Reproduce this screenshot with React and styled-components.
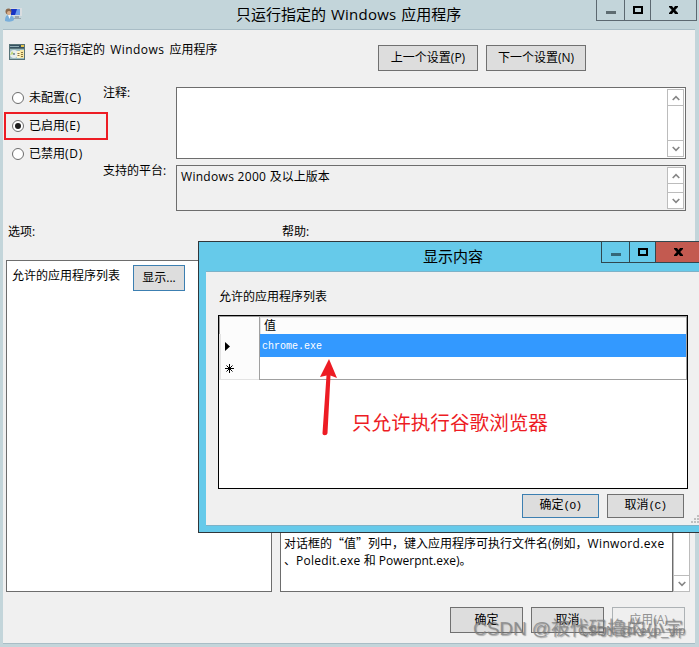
import React from "react";
import styled, { createGlobalStyle } from "styled-components";

const GlobalStyle = createGlobalStyle`
  * { box-sizing: border-box; }
  body {
    margin: 0;
    overflow: hidden;
    font-family: "Open Sans", "Noto Sans CJK SC", sans-serif;
    font-size: 12px;
    line-height: 16px;
    color: #000;
  }
`;

const Window = styled.div`
  position: relative;
  display: flex;
  flex-direction: column;
  width: 699px;
  height: 647px;
  padding: 0 4px 3px 3px;
  background: #c3d5da;
  overflow: hidden;
  white-space: nowrap;
`;
const TitleBar = styled.div`
  display: flex;
  justify-content: space-between;
  height: ${props => props.h}px;
  flex: none;
`;
const AppIcon = styled.svg`
  width: 18px;
  height: 16px;
  margin: 7px 0 0 1px;
  flex: none;
`;
const Title = styled.div`
  flex: 1;
  padding-left: ${props => props.left}px;
  font-size: 15px;
  line-height: 29px;
  word-spacing: 1px;
`;
const Controls = styled.div`
  display: flex;
  height: 22px;
  margin-top: -1px;
  margin-right: ${props => props.right}px;
  border: 1px solid ${props => props.line};
`;
const Control = styled.div`
  display: flex;
  align-items: center;
  justify-content: center;
  width: ${props => props.w}px;
  background: ${props => props.bg || "transparent"};
  border-left: ${props => props.line ? `1px solid ${props.line}` : "none"};
`;
const Client = styled.div`
  flex: 1;
  background: #f0f0f0;
  border-top: 1px solid #a9bdc6;
  border-bottom: 1px solid #a9bdc6;
`;
const Header = styled.div`
  display: flex;
  height: 57px;
  padding: 14px 0 0 6px;
`;
const PolicyIcon = styled.svg`
  width: 16px;
  height: 16px;
  flex: none;
`;
const PolicyName = styled.div`
  width: 353px;
  margin-top: -2px;
  padding-left: 8px;
  word-spacing: 2px;
`;
// slightly wider latin letters, without touching the chinese ones
const Latin = styled.span`
  letter-spacing: ${props => props.spacing || 0.25}px;
`;
const Quote = styled.span`
  font-family: "Noto Sans CJK SC", sans-serif;
`;
const Button = styled.button`
  width: ${props => props.w}px;
  height: ${props => props.h || 26}px;
  padding: 0 0 ${props => props.lift || 0}px;
  margin: 0 8px 0 0;
  flex: none;
  font: inherit;
  line-height: 16px;
  color: ${props => props.off ? "#929292" : "#000"};
  background: ${props => props.off ? "#efefef" : "#dddddd"};
  border: 1px solid ${props => props.off ? "#adb2b5" : props.focus ? "#3c7fb1" : "#707070"};
`;
const HeaderButtons = styled.div`
  display: flex;
  margin-top: 1px;
`;
const Settings = styled.div`
  display: grid;
  grid-template-columns: 100px 73px 510px;
  height: 124px;
`;
const Radios = styled.div`
  padding: 0 0 0 1px;
`;
const RadioRow = styled.label`
  display: flex;
  align-items: center;
  width: 104px;
  height: 28px;
  margin-top: ${props => props.first ? "-3px" : "0"};
  padding: 0 0 1px 6px;
  border: 2px solid ${props => props.marked ? "#ed1c24" : "transparent"};
`;
const Dot = styled.span`
  display: flex;
  align-items: center;
  justify-content: center;
  width: 12px;
  height: 12px;
  margin-right: 5px;
  border: 1px solid #6c6c6c;
  border-radius: 50%;
  background: #fff;
  &::after {
    content: "";
    width: 6px;
    height: 6px;
    border-radius: 50%;
    background: ${props => props.on ? "#1c1c1c" : "transparent"};
  }
`;
const Labels = styled.div`
  display: grid;
  grid-template-rows: 78px 46px;
  margin-top: -2px;
`;
const Fields = styled.div`
  display: grid;
  grid-template-rows: 72px 46px;
  gap: 6px;
`;
const Field = styled.div`
  display: flex;
  justify-content: space-between;
  padding: 1px;
  background: ${props => props.bg};
  border: 1px solid #6d6d6d;
`;
const FieldText = styled.div`
  padding: 2px 0 0 3px;
`;
const ScrollTrack = styled.div`
  display: flex;
  flex-direction: column;
  justify-content: space-between;
  width: 17px;
  background: #fff;
  border: 1px solid #bcbcbc;
`;
const ScrollButton = styled.div`
  display: flex;
  align-items: center;
  justify-content: center;
  height: 16px;
  border-top: ${props => props.down ? "1px solid #bcbcbc" : "none"};
  border-bottom: ${props => props.down ? "none" : "1px solid #bcbcbc"};
`;
const SectionLabels = styled.div`
  display: grid;
  grid-template-columns: 274px 1fr;
  height: 49px;
  padding: 13px 0 0 5px;
`;
const Panels = styled.div`
  display: flex;
  height: 332px;
  padding-left: 3px;
  gap: 8px;
`;
const Panel = styled.div`
  display: flex;
  align-items: ${props => props.end ? "flex-end" : "flex-start"};
  width: ${props => props.w}px;
  padding: ${props => props.pad};
  background: #fff;
  border: 1px solid #6d6d6d;
`;
const HelpPanel = styled.div`
  display: flex;
`;
const HelpText = styled.div`
  line-height: 17px;
`;
const OptionName = styled.div`
  width: 121px;
  margin-top: 3px;
`;
const Footer = styled.div`
  display: flex;
  padding: 15px 0 0 447px;
`;

const Dialog = styled.div`
  position: absolute;
  left: 198px;
  top: 241px;
  display: flex;
  flex-direction: column;
  width: 510px;
  height: 292px;
  padding: 0 0 6px 7px;
  background: #66caea;
  border: 1px solid #30363a;
`;
const DialogBody = styled.div`
  position: relative;
  flex: 1;
  padding: 17px 0 0 12px;
  background: #f0f0f0;
  border-top: 1px solid #7db2c8;
  border-bottom: 1px solid #7db2c8;
`;
const DialogLabel = styled.div`
  height: 26px;
  padding-left: 1px;
`;
const Table = styled.div`
  width: 470px;
  height: 174px;
  background: #fff;
  border: 1px solid #000;
`;
const TableRow = styled.div`
  display: grid;
  grid-template-columns: 41px 427px;
  height: ${props => props.h}px;
`;
const RowHead = styled.div`
  display: flex;
  align-items: center;
  padding-left: ${props => props.left || 6}px;
  background: #fcfcfc;
  border: solid #a0a0a0;
  border-width: ${props => props.top ? "1px 1px 1px 0" : "0 1px 0 0"};
  box-shadow: ${props => props.top ? "inset 1px 0 0 #a0a0a0" : "inset 2px -1px 0 #e3e3e3"};
`;
const Cell = styled.div`
  padding-left: ${props => props.selected ? 2 : 4}px;
  line-height: ${props => props.lh}px;
  color: ${props => props.selected ? "#fff" : "#000"};
  background: ${props => props.selected ? "#3399ff" : props.head ? "#fcfcfc" : "#fff"};
  border: solid #a0a0a0;
  border-width: ${props => props.head ? "1px 1px 1px 0" : "0 1px 1px 0"};
  box-shadow: ${props => props.head ? "inset 1px 1px 0 #e3e3e3" : "none"};
`;
const Mono = styled.span`
  font-family: "Liberation Mono", monospace;
  font-size: ${props => props.size || 10}px;
  letter-spacing: ${props => props.size ? (6 - props.size * 0.6).toFixed(2) : 0}px;
`;
const DialogButtons = styled.div`
  display: flex;
  padding: 5px 0 0 304px;
`;
const Grip = styled.svg`
  position: absolute;
  left: 485px;
  top: 243px;
`;
const Arrow = styled.svg`
  position: absolute;
  left: 317px;
  top: 358px;
`;
const Note = styled.div`
  position: absolute;
  left: 352px;
  top: 409px;
  font-size: 19.6px;
  line-height: 28px;
  color: #ed1c24;
`;
const Watermark = styled.div`
  position: absolute;
  left: ${props => props.x}px;
  top: ${props => props.y}px;
  font-family: "Liberation Sans", "Noto Sans CJK SC", sans-serif;
  font-size: ${props => props.size}px;
  line-height: 24px;
  color: ${props => props.tone};
  text-shadow: 1px 1px 1px rgba(70, 70, 70, 0.4);
`;

const Chevron = ({ down }) => (
  <svg width="8" height="6" viewBox="0 0 8 6">
    <path d={down ? "M.7 1 4 4.4 7.3 1" : "M.7 5 4 1.6 7.3 5"} fill="none" stroke="#868686" strokeWidth="1.6" />
  </svg>
);

const Scrollbar = () => (
  <ScrollTrack>
    <ScrollButton><Chevron /></ScrollButton>
    <ScrollButton down><Chevron down /></ScrollButton>
  </ScrollTrack>
);

const WindowControls = ({ right, line, close, minColor }) => (
  <Controls right={right} line={line}>
    <Control w={27}>
      <svg width="10" height="12"><rect y="7" width="10" height="3" fill={minColor} /></svg>
    </Control>
    <Control w={26} line={line}>
      <svg width="10" height="8"><path d="M0 0h10v8H0zM2 2v4h6V2z" fill="#000" fillRule="evenodd" /></svg>
    </Control>
    <Control w={46} line={line} bg={close}>
      <svg width="9" height="8"><path d="M0 0h3l1.500 2L6 0h3v1L6.200 4 9 7v1H6L4.500 6 3 8H0V7l2.800-3L0 1z" fill="#000" /></svg>
    </Control>
  </Controls>
);

const options = [
  { label: "未配置", hotkey: "(C)" },
  { label: "已启用", hotkey: "(E)", on: true },
  { label: "已禁用", hotkey: "(D)" },
];

const App = () => {
  return <>
    <GlobalStyle />
    <Window>
      <TitleBar h={29}>
        <AppIcon viewBox="0 0 18 16">
          <path d="M6 1h12v8H6z" fill="#d9dde0" />
          <path d="M7 2h9v6H7z" fill="#1733c4" />
          <path d="M13 2h3v6h-5z" fill="#6b9cec" />
          <path d="M11 9h4v2h2v1H9v-1h2z" fill="#9aa5ac" />
          <circle cx="4.500" cy="4.500" r="3" fill="#8d6b4e" />
          <circle cx="5" cy="6" r="2" fill="#dcb08c" />
          <path d="M1 14c0-4 1-6 4-6s5 2 5 5c-2 2-6 2-9 1z" fill="#78aedb" />
          <path d="m4 8 1.500 4L7 8z" fill="#f4f8fb" />
        </AppIcon>
        <Title left={214}>只运行指定的 <Latin>Windows</Latin> 应用程序</Title>
        <WindowControls right={-2} line="#5c6870" minColor="#5e6c71" />
      </TitleBar>
      <Client>
        <Header>
          <PolicyIcon viewBox="0 0 16 16">
            <path d="M0 0h16v16H0z" fill="#587378" />
            <path d="M1 1h14v3H1z" fill="#35505f" />
            <path d="M1 2h9v1H1z" fill="#91aeb4" />
            <path d="M12 1h3v2h-3z" fill="#e7c34b" />
            <path d="M1 5h14v10H1z" fill="#9cbbc0" />
            <circle cx="5" cy="10" r="4" fill="#e8eeee" />
            <path d="m3 7 2 3-4 1z" fill="#bed77c" />
            <circle cx="5" cy="10" r="1" fill="#68808a" />
            <path d="M8 7h4v7H8z" fill="#fff4c7" />
            <path d="M11 6h4v8h-4z" fill="#f8e7a4" />
            <path d="M8.500 9.500h2M8.500 11.500h2M12 8.500h2M12 10.500h2M12 12.500h2" stroke="#8a7443" />
          </PolicyIcon>
          <PolicyName>只运行指定的 <Latin spacing={0.45}>Windows</Latin> 应用程序</PolicyName>
          <HeaderButtons>
            <Button w={100}>上一个设置(P)</Button>
            <Button w={100}>下一个设置(N)</Button>
          </HeaderButtons>
        </Header>
        <Settings>
          <Radios>
            {options.map((o, i) => (
              <RadioRow key={o.label} first={i === 0} marked={o.on}>
                <Dot on={o.on} />{o.label}<Latin spacing={0.7}>{o.hotkey}</Latin>
              </RadioRow>
            ))}
          </Radios>
          <Labels>
            <div>注释:</div>
            <div>支持的平台:</div>
          </Labels>
          <Fields>
            <Field bg="#fff"><FieldText /><Scrollbar /></Field>
            <Field bg="#f0f0f0"><FieldText><Latin spacing={0.3}>Windows 2000 </Latin>及以上版本</FieldText><Scrollbar /></Field>
          </Fields>
        </Settings>
        <SectionLabels>
          <div>选项:</div>
          <div>帮助:</div>
        </SectionLabels>
        <Panels>
          <Panel w={266} pad="4px 0 0 5px">
            <OptionName>允许的应用程序列表</OptionName>
            <Button w={52} focus>显示...</Button>
          </Panel>
          <HelpPanel>
            <Panel w={393} pad="0 0 22px 3px" end>
              <HelpText>
                对话框的<Quote>“值”</Quote>列中，键入应用程序可执行文件名(例如，<Latin spacing={0.35}>Winword.exe</Latin><br />
                、<Latin>Poledit.exe</Latin> 和 Powerpnt.exe)。
              </HelpText>
            </Panel>
            <Scrollbar />
          </HelpPanel>
        </Panels>
        <Footer>
          <Button w={73}>确定</Button>
          <Button w={73}>取消</Button>
          <Button w={73} off>应用(A)</Button>
        </Footer>
      </Client>

      <Dialog>
        <TitleBar h={29}>
          <Title left={217}>显示内容</Title>
          <WindowControls right={5} line="#30474f" minColor="#356879" close="#c35a50" />
        </TitleBar>
        <DialogBody>
          <DialogLabel>允许的应用程序列表</DialogLabel>
          <Table>
            <TableRow h={18}>
              <RowHead top />
              <Cell head lh={17}>值</Cell>
            </TableRow>
            <TableRow h={23}>
              <RowHead>
                <svg width="5" height="9"><path d="M0 0v9l5-4.500z" fill="#000" /></svg>
              </RowHead>
              <Cell selected lh={21}><Mono>chrome.exe</Mono></Cell>
            </TableRow>
            <TableRow h={23}>
              <RowHead>
                <svg width="9" height="9"><path d="M4.500 0v9M0 4.500h9M1.500 1.500l6 6M7.500 1.500l-6 6" stroke="#000" /></svg>
              </RowHead>
              <Cell lh={23} />
            </TableRow>
          </Table>
          <DialogButtons>
            <Button w={77} h={24} lift={2} focus>确定<Mono size={11}>(O)</Mono></Button>
            <Button w={77} h={24} lift={2}>取消<Mono size={11}>(C)</Mono></Button>
          </DialogButtons>
          <Grip width="9" height="9">
            <path d="M6 0h2v2H6zM3 3h2v2H3zM6 3h2v2H6zM0 6h2v2H0zM3 6h2v2H3zM6 6h2v2H6z" fill="#bfbfbf" />
          </Grip>
        </DialogBody>
      </Dialog>

      <Arrow width="22" height="78" viewBox="0 0 22 78">
        <path d="M12 1 20 20 13.500 17.500 10.500 75c-.3 3-5.300 3-5 0L9.500 17.500 3 19z" fill="#ed1c24" />
      </Arrow>
      <Note>只允许执行谷歌浏览器</Note>
      <Watermark x={473} y={617} size={18.9} tone="rgba(130,130,130,.75)">CSDN @被代码撸的小宇</Watermark>
      <Watermark x={578} y={619} size={13.3} tone="rgba(130,130,130,.85)">CSDN @keyp_vip</Watermark>
    </Window>
  </>
}
export default App;
